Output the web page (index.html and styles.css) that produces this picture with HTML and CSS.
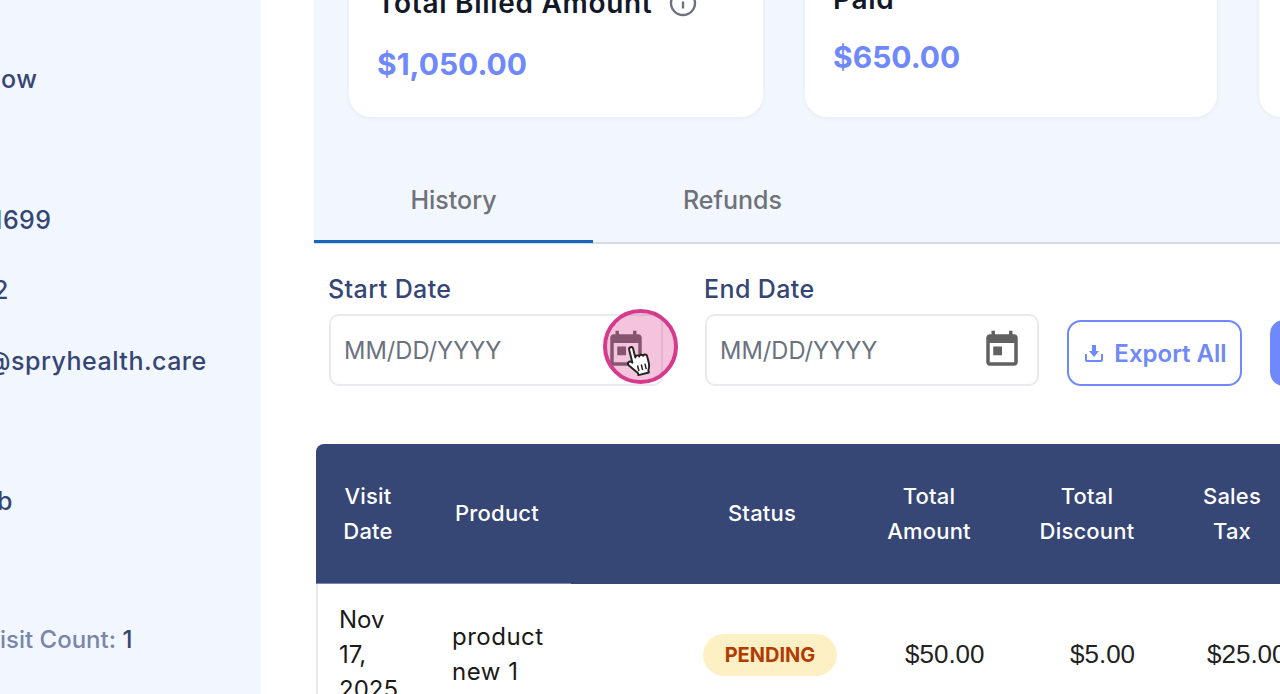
FILE: index.html
```html
<!DOCTYPE html>
<html lang="en">
<head>
  <meta charset="UTF-8">
  <title>Billing History</title>
  <link rel="stylesheet" href="styles.css">
</head>
<body>
  <div class="page">
    <aside class="sidebar">
      <p class="side-row row-name">ow</p>
      <p class="side-row row-phone">1699</p>
      <p class="side-row row-dob">2</p>
      <p class="side-row row-email">@spryhealth.care</p>
      <p class="side-row row-tag">b</p>
      <p class="side-row row-count"><span class="muted">isit Count:</span> 1</p>
    </aside>

    <main class="main">
      <section class="summary">
        <div class="cards">
          <div class="card">
            <h3 class="card-title">Total Billed Amount
              <svg class="info-icon" viewBox="0 0 28 28" width="28" height="28">
                <circle cx="14" cy="14" r="12" fill="none" stroke="#6b7280" stroke-width="2.4"/>
                <path d="M14 12.5v7" stroke="#6b7280" stroke-width="2.4"/>
                <circle cx="14" cy="8.5" r="1.5" fill="#6b7280"/>
              </svg>
            </h3>
            <p class="card-value">$1,050.00</p>
          </div>
          <div class="card card-short">
            <h3 class="card-title">Paid</h3>
            <p class="card-value">$650.00</p>
          </div>
          <div class="card"></div>
        </div>
        <div class="tabs">
          <div class="tab active">History</div>
          <div class="tab">Refunds</div>
        </div>
      </section>

      <section class="filters">
        <div class="filter">
          <label class="filter-label">Start Date</label>
          <div class="date-input">
            <span class="placeholder">MM/DD/YYYY</span>
            <svg class="cal-icon" viewBox="0 0 24 24" width="42" height="42"><path d="M19 3h-1V1h-2v2H8V1H6v2H5c-1.11 0-1.99.9-1.99 2L3 19c0 1.1.89 2 2 2h14c1.1 0 2-.9 2-2V5c0-1.1-.9-2-2-2zm0 16H5V8h14v11zM7 10h5v5H7z"/></svg>
            <div class="click-ring"></div>
            <svg class="hand" viewBox="0 0 26 30" width="30" height="34">
              <path d="M7 3.2c0-2.4 3.6-2.4 3.6 0v8c.2-1.8 3.4-1.8 3.6 0 .3-1.6 3.3-1.5 3.5.3.5-1.3 3.2-1 3.3.9v6.6c0 3-1 4.2-2 6v2H9.5v-2L3.4 16.6c-1.5-2.2 1.2-4.200 3-2.400l.6.8z" fill="#fff" stroke="#222" stroke-width="1.700" stroke-linejoin="round"/>
              <path d="M10.800 18.500v5M14.200 18.500v5M17.500 18.500v5" stroke="#222" stroke-width="1.300"/>
            </svg>
          </div>
        </div>
        <div class="filter">
          <label class="filter-label">End Date</label>
          <div class="date-input">
            <span class="placeholder">MM/DD/YYYY</span>
            <svg class="cal-icon" viewBox="0 0 24 24" width="42" height="42"><path d="M19 3h-1V1h-2v2H8V1H6v2H5c-1.11 0-1.99.9-1.99 2L3 19c0 1.1.89 2 2 2h14c1.1 0 2-.9 2-2V5c0-1.1-.9-2-2-2zm0 16H5V8h14v11zM7 10h5v5H7z"/></svg>
          </div>
        </div>
        <button class="btn-export">
          <svg viewBox="0 0 24 24" width="24" height="24"><path d="M3 13h2v6h14v-6h2v6c0 1.100-.9 2-2 2H5c-1.100 0-2-.9-2-2zM10 4h4v6h3l-5 6-5-6h3z" fill="#6f88fb"/></svg>
          Export All
        </button>
        <button class="btn-primary"></button>
      </section>

      <div class="table-wrap">
        <table class="history">
          <thead>
            <tr>
              <th class="th-edge">Visit<br>Date</th>
              <th class="th-left">Product</th>
              <th>Status</th>
              <th>Total<br>Amount</th>
              <th>Total<br>Discount</th>
              <th>Sales<br>Tax</th>
            </tr>
          </thead>
          <tbody>
            <tr>
              <td class="td-date">Nov<br>17,<br>2025</td>
              <td class="td-product">product<br>new 1</td>
              <td class="td-status"><span class="pill">PENDING</span></td>
              <td class="td-money amount">$50.00</td>
              <td class="td-money discount">$5.00</td>
              <td class="td-money tax">$25.00</td>
            </tr>
          </tbody>
        </table>
      </div>
    </main>
  </div>
</body>
</html>
```

FILE: styles.css
```css
* {
  margin: 0;
  padding: 0;
  box-sizing: border-box;
}

html, body {
  height: 100%;
  overflow: hidden;
}

body {
  font-family: 'Inter', 'Noto Sans', sans-serif;
  background-color: #fff;
  color: #111827;
}

.page {
  display: flex;
  height: 694px;
  overflow: hidden;
}

/* left panel, cut off by the window edge */
.sidebar {
  flex: 0 0 261px;
  background-color: #f2f7ff;
  overflow: hidden;
  color: #354675;
  font-size: 25px;
  font-weight: 500;
  letter-spacing: 0.5px;
  white-space: nowrap;
}

.side-row {
  line-height: 36px;
}

.row-name { margin-top: 61px; margin-left: 1px; }
.row-phone { margin-top: 105px; margin-left: -8px; }
.row-dob { margin-top: 34px; margin-left: -7px; }
.row-email { margin-top: 35px; margin-left: -14px; }
.row-tag { margin-top: 104px; margin-left: -3px; }
.row-count { margin-top: 103px; font-size: 24px; letter-spacing: 0; }

.muted {
  color: #7886a9;
}

.main {
  flex: 0 0 966px;
  margin-left: 53px;
  overflow: hidden;
}

.summary {
  background-color: #f2f7fe;
}

.cards {
  display: flex;
  gap: 42px;
  margin-top: -60px;
  padding-left: 35px;
}

.card {
  flex: 0 0 414px;
  height: 177px;
  padding: 45px 0 0 28px;
  background-color: #fff;
  border-radius: 22px;
  box-shadow: 0 1px 4px rgba(60, 80, 120, 0.08);
}

.card-short {
  flex-basis: 412px;
  padding-top: 41px;
}

.card-title {
  display: flex;
  align-items: center;
  gap: 17px;
  font-size: 28px;
  font-weight: 600;
  letter-spacing: 0.7px;
  line-height: 36px;
}

.info-icon {
  flex: none;
}

.card-value {
  margin-top: 19px;
  font-size: 30px;
  font-weight: 700;
  line-height: 48px;
  color: #6f88fb;
}

.card-short .card-value {
  margin-top: 16px;
}

.tabs {
  display: flex;
  margin-top: 41px;
  border-bottom: 2px solid #d5dbe3;
}

.tab {
  width: 279px;
  height: 85px;
  padding-top: 1px;
  margin-bottom: -1px;
  display: flex;
  align-items: center;
  justify-content: center;
  border-bottom: 3px solid transparent;
  font-size: 25px;
  font-weight: 500;
  color: #6f7278;
}

.tab.active {
  border-bottom-color: #1565c0;
}

.filters {
  display: flex;
  align-items: flex-end;
  padding: 27px 0 0 15px;
}

.filter {
  margin-right: 42px;
}

.filter:nth-child(2) {
  margin-right: 28px;
}

.filter-label {
  display: block;
  margin: 0 0 7px -1px;
  font-size: 25px;
  font-weight: 500;
  letter-spacing: 0.4px;
  line-height: 36px;
  color: #354675;
}

.date-input {
  position: relative;
  display: flex;
  align-items: center;
  justify-content: space-between;
  width: 334px;
  height: 72px;
  padding: 0 14px 0 13px;
  border: 2px solid #e8eaee;
  border-radius: 10px;
}

.placeholder {
  font-size: 23.7px;
  color: #6b7280;
}

.cal-icon {
  fill: #616161;
}

/* click highlight from the screen recording */
.click-ring {
  position: absolute;
  left: 272px;
  top: -7px;
  width: 75px;
  height: 75px;
  border: 4px solid #d63a8c;
  border-radius: 50%;
  background-color: rgba(214, 58, 140, 0.3);
}

.hand {
  position: absolute;
  left: 293px;
  top: 28px;
  transform: rotate(-14deg);
}

.btn-export {
  flex: none;
  display: flex;
  align-items: center;
  justify-content: center;
  gap: 8px;
  width: 175px;
  height: 66px;
  background-color: #fff;
  border: 2px solid #6f88fb;
  border-radius: 14px;
  color: #6f88fb;
  font-family: inherit;
  font-size: 24px;
  font-weight: 600;
  white-space: nowrap;
}

.btn-primary {
  flex: none;
  width: 100px;
  height: 66px;
  margin-left: 28px;
  background-color: #6f88fb;
  border: none;
  border-radius: 14px;
}

.table-wrap {
  margin: 58px 0 0 2px;
}

.history {
  width: 980px;
  table-layout: fixed;
  border-collapse: separate;
  border-spacing: 0;
}

.history th:nth-child(1) { width: 104px; }
.history th:nth-child(2) { width: 252px; }
.history th:nth-child(3) { width: 180px; }
.history th:nth-child(4) { width: 154px; }
.history th:nth-child(5) { width: 162px; }
.history th:nth-child(6) { width: 128px; }

.history th {
  height: 140px;
  padding-bottom: 1px;
  background-color: #364675;
  color: #fff;
  font-size: 22px;
  font-weight: 500;
  letter-spacing: 0.2px;
  line-height: 35px;
  text-align: center;
}

.th-edge {
  position: relative;
  border-top-left-radius: 8px;
}

/* lighter hairline under the first columns */
.th-edge::after {
  content: '';
  position: absolute;
  left: 0;
  bottom: 0;
  width: 255px;
  height: 1px;
  background-color: #7b87a8;
}

.history th.th-left {
  text-align: left;
  padding-left: 35px;
}

.history td {
  height: 140px;
  font-size: 24px;
  line-height: 35px;
  color: #1a1a1a;
  vertical-align: middle;
}

.td-date {
  padding-left: 21px;
  border-left: 2px solid #e6e8ef;
}

.history .td-product {
  padding-left: 32px;
  letter-spacing: 0.5px;
}

.td-status {
  padding-left: 31px;
  padding-top: 2px;
}

.pill {
  display: inline-block;
  width: 134px;
  height: 42px;
  border-radius: 21px;
  background-color: #fdf0c4;
  color: #b23c00;
  font-size: 20px;
  font-weight: 700;
  line-height: 42px;
  text-align: center;
}

.history .td-money {
  font-family: 'Liberation Sans', Arial, sans-serif;
  font-size: 26px;
  color: #222;
}

.amount { padding-left: 53px; }
.discount { padding-left: 64px; }
.tax { padding-left: 39px; }
```
